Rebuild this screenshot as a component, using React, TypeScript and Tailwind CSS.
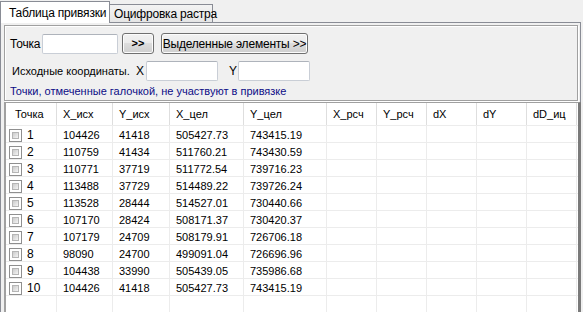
import React from 'react'

const rows = [
  ['1', '104426', '41418', '505427.73', '743415.19'],
  ['2', '110759', '41434', '511760.21', '743430.59'],
  ['3', '110771', '37719', '511772.54', '739716.23'],
  ['4', '113488', '37729', '514489.22', '739726.24'],
  ['5', '113528', '28444', '514527.01', '730440.66'],
  ['6', '107170', '28424', '508171.37', '730420.37'],
  ['7', '107179', '24709', '508179.91', '726706.18'],
  ['8', '98090', '24700', '499091.04', '726696.96'],
  ['9', '104438', '33990', '505439.05', '735986.68'],
  ['10', '104426', '41418', '505427.73', '743415.19'],
]

const headers = ['Точка', 'X_исх', 'Y_исх', 'X_цел', 'Y_цел', 'X_рсч', 'Y_рсч', 'dX', 'dY', 'dD_иц']

const gridCols = 'grid grid-cols-[51px_56px_57px_74px_83px_50px_50px_50px_50px_50px]'

const textBox = 'h-[20px] border border-[#c9ced6] border-t-[#aeb3bb] bg-white rounded-[2px]'

const winButton =
  'h-[21px] whitespace-nowrap rounded-[3px] border border-[#707070] bg-[linear-gradient(#f2f2f2_0%,#ebebeb_50%,#dddddd_50%,#cfcfcf_100%)] shadow-[inset_0_0_0_1px_#fcfcfc] text-[11px] text-black leading-none'

const CheckBox = () => (
  <span className="block h-[13px] w-[13px] border border-[#8f8f8f] bg-white p-[2px]">
    <span className="block h-full w-full border border-[#b5b5b5] bg-[linear-gradient(135deg,#cbcbcb,#f4f4f4)]" />
  </span>
)

export default function App() {
  return (
    <div
      className="h-[312px] w-[583px] overflow-hidden whitespace-nowrap bg-[#f0f0f0] text-[11px] text-black"
      style={{ fontFamily: '"Liberation Sans", Arial, sans-serif' }}
    >
      <div className="flex h-[22px] items-end">
        <div className="relative z-10 -mb-px flex h-[22px] w-[110px] items-center border border-b-0 border-[#898c95] bg-white pl-[8px] text-[12px] tracking-[-0.2px]">
          Таблица привязки
        </div>
        <div className="flex h-[18px] w-[103px] items-center border border-l-0 border-b-0 border-[#898c95] bg-[linear-gradient(#f3f3f3,#e5e5e5)] pl-[4px] text-[12px] tracking-[-0.2px]">
          Оцифровка растра
        </div>
      </div>

      <div className="h-[290px] w-[581px] border border-b-0 border-[#898c95] pt-[2px] pl-[3px]">
        <div className="flex h-[76px] w-[574px] flex-col border border-[#a0a0a0] pl-[5px] pt-[7px] shadow-[inset_1px_1px_0_#ffffff,1px_1px_0_#ffffff]">
          <div className="flex h-[21px] items-center">
            <span className="w-[32px] text-[12px] tracking-[-0.2px]">Точка</span>
            <div className={`${textBox} w-[76px]`} />
            <button type="button" className={`${winButton} ml-[4px] w-[32px] font-bold`}>
              &gt;&gt;
            </button>
            <button type="button" className={`${winButton} ml-[7px] w-[147px] text-[12px] tracking-[-0.2px]`}>
              Выделенные элементы &gt;&gt;
            </button>
          </div>
          <div className="mt-[7px] flex h-[20px] items-center">
            <span className="ml-[2px] w-[124px] text-[11px]">Исходные координаты.</span>
            <span className="w-[10px] text-[12px]">X</span>
            <div className={`${textBox} w-[72px]`} />
            <span className="ml-[11px] w-[9px] text-[12px]">Y</span>
            <div className={`${textBox} w-[72px]`} />
          </div>
          <div className="mt-[3px] text-[11px] leading-[14px] text-[#0c0c86]">
            Точки, отмеченные галочкой, не участвуют в привязке
          </div>
        </div>

        <div className="mt-px h-[213px] w-[577px] border-l-2 border-r-[3px] border-t border-l-[#a0a0a0] border-r-[#7a7a7a] border-t-[#a0a0a0] bg-white">
          <div className={`${gridCols} h-[23px] border-b border-[#ececec]`}>
            {headers.map((h, i) => (
              <div
                key={h}
                className={`flex items-center border-r border-[#dedede] text-[11px] ${i === 0 ? 'pl-[9px]' : 'pl-[6px]'}`}
              >
                {h}
              </div>
            ))}
          </div>
          {rows.map((r) => (
            <div key={r[0]} className={`${gridCols} h-[17px] border-b border-[#ececec]`}>
              <div className="flex items-center border-r border-[#ececec] pl-[3px]">
                <CheckBox />
                <span className="ml-[5px] text-[12px]">{r[0]}</span>
              </div>
              {r.slice(1).map((v, i) => (
                <div key={i} className="flex items-center border-r border-[#ececec] pl-[6px] text-[11px]">
                  {v}
                </div>
              ))}
              {[0, 1, 2, 3, 4].map((k) => (
                <div key={`e${k}`} className="border-r border-[#ececec]" />
              ))}
            </div>
          ))}
          <div className={`${gridCols} h-[17px] border-b border-[#ececec]`}>
            {headers.map((h) => (
              <div key={`b${h}`} className="border-r border-[#ececec]" />
            ))}
          </div>
        </div>
      </div>
    </div>
  )
}
